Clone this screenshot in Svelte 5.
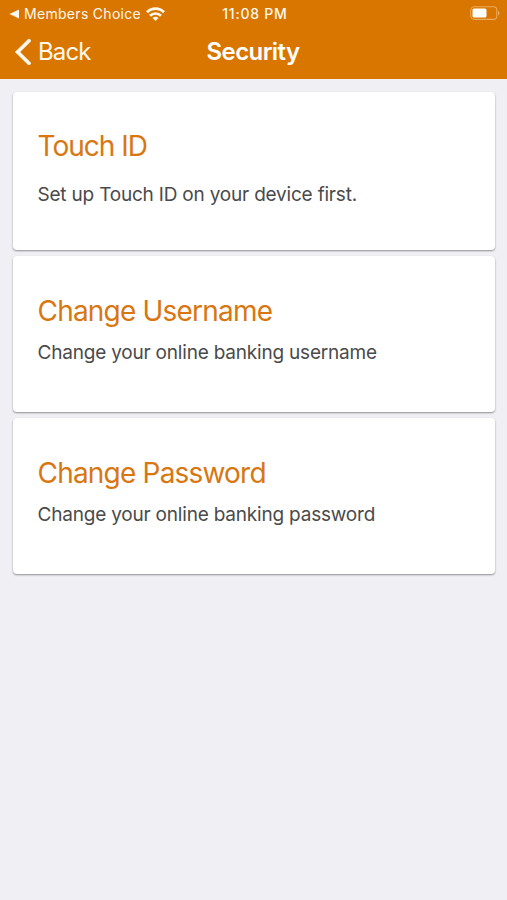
<script>
  const options = [
    {
      title: "Touch ID",
      text: "Set up Touch ID on your device first.",
      kind: "touch",
    },
    {
      title: "Change Username",
      text: "Change your online banking username",
      kind: "username",
    },
    {
      title: "Change Password",
      text: "Change your online banking password",
      kind: "password",
    },
  ];
</script>

<div class="screen">
  <header>
    <div class="status-bar">
      <div class="return-app">
        <svg class="return-arrow" width="10" height="10" viewBox="0 0 10 10">
          <path d="M0.5 5L10 0.6V9.4Z" fill="currentColor" />
        </svg>
        <span class="app-name">Members Choice</span>
        <svg class="wifi" width="19" height="14" viewBox="0 0 19 14">
          <g fill="none" stroke="currentColor" stroke-width="2.7">
            <path d="M1 5.2C5.8 0.4 13.2 0.4 18 5.2" />
            <path d="M4 8.8C7.1 5.7 11.9 5.7 15 8.8" />
          </g>
          <path
            d="M6.5 11C8.2 9.4 10.8 9.4 12.5 11L9.5 14Z"
            fill="currentColor"
          />
        </svg>
      </div>
      <span class="time">11:08 PM</span>
      <svg class="battery" width="30" height="15" viewBox="0 0 30 15">
        <rect
          x="0.8"
          y="0.8"
          width="26"
          height="12.6"
          rx="3.4"
          fill="none"
          stroke="#eba95c"
          stroke-width="1.1"
        />
        <rect x="2.5" y="2.6" width="14" height="9" rx="1.5" fill="#fff" />
        <path d="M28 4.8C30 5.6 30 8.6 28 9.4Z" fill="#eba95c" />
      </svg>
    </div>
    <nav>
      <button class="back-btn">
        <svg width="17" height="27" viewBox="0 0 17 27">
          <path
            d="M15 2.8L3.6 14L15 25.2"
            fill="none"
            stroke="currentColor"
            stroke-width="3.7"
            stroke-linecap="round"
          />
        </svg>
        <span>Back</span>
      </button>
      <h1>Security</h1>
    </nav>
  </header>

  <main>
    {#each options as option}
      <section class="card {option.kind}">
        <h2>{option.title}</h2>
        <p>{option.text}</p>
      </section>
    {/each}
  </main>
</div>

<style>
  :global(body) {
    margin: 0;
    background-color: #efeff4;
  }

  .screen {
    min-height: 900px;
    background-color: #efeff4;
    font-family: Inter, "Liberation Sans", sans-serif;
    box-sizing: border-box;
  }

  header {
    height: 79px;
    background-color: #d87600;
    color: #fff8ec;
  }

  .status-bar {
    display: grid;
    grid-template-columns: 1fr auto 1fr;
    align-items: center;
    height: 27px;
    padding: 0 7px 0 9px;
    font-size: 14px;
    line-height: 18px;
  }

  .return-app {
    display: flex;
    align-items: center;
  }

  .app-name {
    margin-left: 5px;
    letter-spacing: 0.3px;
    white-space: nowrap;
  }

  .wifi {
    margin-left: 5px;
  }

  .time {
    font-weight: 500;
    letter-spacing: 0.75px;
    margin-right: -0.75px;
  }

  .battery {
    justify-self: end;
  }

  nav {
    display: grid;
    grid-template-columns: 1fr auto 1fr;
    align-items: center;
    height: 49px;
    padding: 0 15px 0 14px;
  }

  .back-btn {
    display: flex;
    align-items: center;
    padding: 0;
    border: none;
    background: none;
    color: inherit;
    font-family: inherit;
    font-size: 24px;
    line-height: 30px;
    cursor: pointer;
  }

  .back-btn span {
    margin-left: 7px;
    letter-spacing: -0.9px;
  }

  h1 {
    margin: 0;
    color: #fff;
    font-size: 24px;
    font-weight: 600;
    line-height: 30px;
    letter-spacing: -0.6px;
  }

  main {
    display: flex;
    flex-direction: column;
    gap: 6px;
    padding: 13px 12px 0 13px;
  }

  .card {
    height: 156px;
    padding: 38px 24.5px 0;
    box-sizing: border-box;
    border-radius: 4px;
    background-color: #fff;
    box-shadow: 0 1px 2px rgba(0, 0, 0, 0.4);
  }

  .card.touch {
    height: 158px;
    padding-top: 37px;
  }

  h2 {
    margin: 0;
    color: #d87712;
    font-size: 28px;
    font-weight: 400;
    line-height: 34px;
    letter-spacing: -0.8px;
  }

  .touch h2 {
    letter-spacing: -1px;
  }

  p {
    margin: 13px 0 0;
    color: #4a4a4a;
    font-size: 19px;
    line-height: 24px;
    letter-spacing: -0.2px;
    white-space: nowrap;
  }

  .touch p {
    margin-top: 20px;
  }
</style>
